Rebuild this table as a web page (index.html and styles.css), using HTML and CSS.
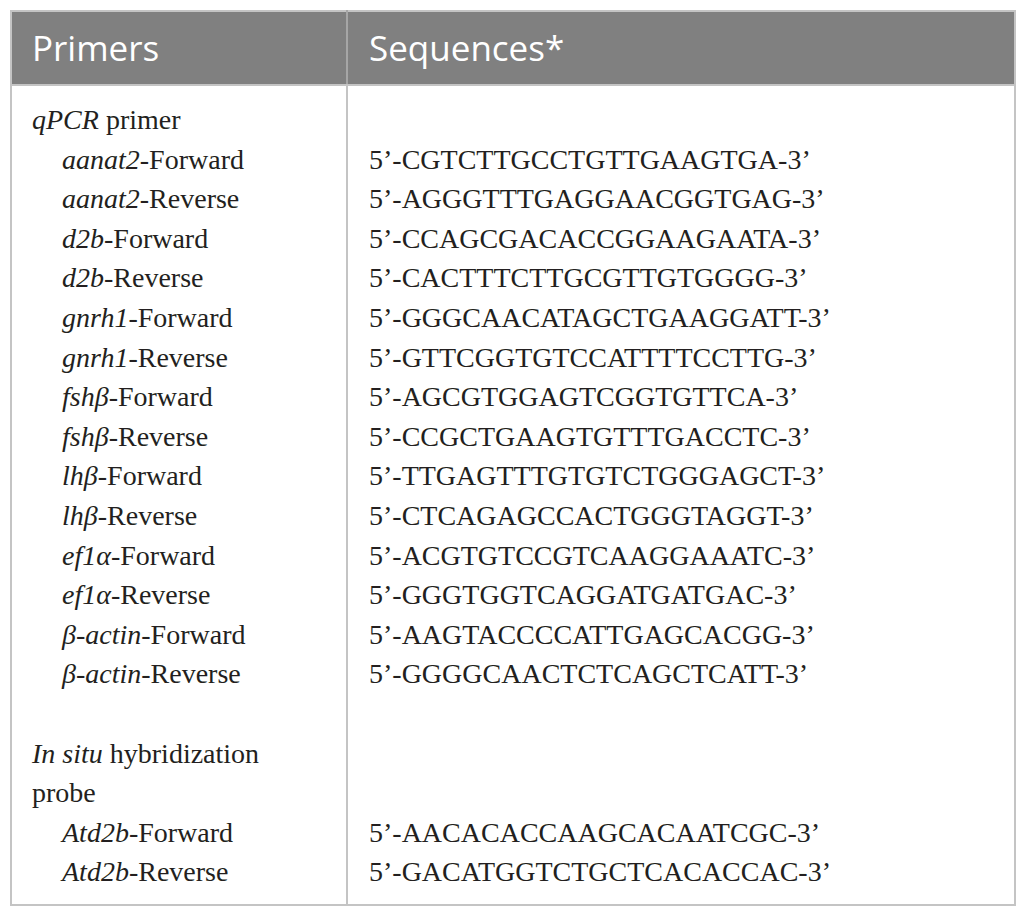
FILE: index.html
```html
<!DOCTYPE html>
<html lang="en">
<head>
<meta charset="utf-8">
<title>Primers</title>
<link rel="stylesheet" href="styles.css">
</head>
<body>
<table class="primers">
  <thead>
    <tr>
      <th class="col-name">Primers</th>
      <th class="col-seq">Sequences*</th>
    </tr>
  </thead>
  <tbody>
    <tr class="first"><td class="name group"><i>qPCR</i> primer</td><td class="seq"></td></tr>
    <tr><td class="name item"><i>aanat2</i>-Forward</td><td class="seq">5’-CGTCTTGCCTGTTGAAGTGA-3’</td></tr>
    <tr><td class="name item"><i>aanat2</i>-Reverse</td><td class="seq">5’-AGGGTTTGAGGAACGGTGAG-3’</td></tr>
    <tr><td class="name item"><i>d2b</i>-Forward</td><td class="seq">5’-CCAGCGACACCGGAAGAATA-3’</td></tr>
    <tr><td class="name item"><i>d2b</i>-Reverse</td><td class="seq">5’-CACTTTCTTGCGTTGTGGGG-3’</td></tr>
    <tr><td class="name item"><i>gnrh1</i>-Forward</td><td class="seq">5’-GGGCAACATAGCTGAAGGATT-3’</td></tr>
    <tr><td class="name item"><i>gnrh1</i>-Reverse</td><td class="seq">5’-GTTCGGTGTCCATTTTCCTTG-3’</td></tr>
    <tr><td class="name item"><i>fshβ</i>-Forward</td><td class="seq">5’-AGCGTGGAGTCGGTGTTCA-3’</td></tr>
    <tr><td class="name item"><i>fshβ</i>-Reverse</td><td class="seq">5’-CCGCTGAAGTGTTTGACCTC-3’</td></tr>
    <tr><td class="name item"><i>lhβ</i>-Forward</td><td class="seq">5’-TTGAGTTTGTGTCTGGGAGCT-3’</td></tr>
    <tr><td class="name item"><i>lhβ</i>-Reverse</td><td class="seq">5’-CTCAGAGCCACTGGGTAGGT-3’</td></tr>
    <tr><td class="name item"><i>ef1α</i>-Forward</td><td class="seq">5’-ACGTGTCCGTCAAGGAAATC-3’</td></tr>
    <tr><td class="name item"><i>ef1α</i>-Reverse</td><td class="seq">5’-GGGTGGTCAGGATGATGAC-3’</td></tr>
    <tr><td class="name item"><i>β-actin</i>-Forward</td><td class="seq">5’-AAGTACCCCATTGAGCACGG-3’</td></tr>
    <tr><td class="name item"><i>β-actin</i>-Reverse</td><td class="seq">5’-GGGGCAACTCTCAGCTCATT-3’</td></tr>
    <tr class="spacer"><td class="name"></td><td class="seq"></td></tr>
    <tr><td class="name group"><i>In situ</i> hybridization<br>probe</td><td class="seq"></td></tr>
    <tr><td class="name item"><i>Atd2b</i>-Forward</td><td class="seq">5’-AACACACCAAGCACAATCGC-3’</td></tr>
    <tr class="last"><td class="name item"><i>Atd2b</i>-Reverse</td><td class="seq">5’-GACATGGTCTGCTCACACCAC-3’</td></tr>
  </tbody>
</table>
</body>
</html>
```

FILE: styles.css
```css
html, body {
  margin: 0;
  padding: 0;
  background: #ffffff;
}

body {
  padding: 10px 10px 0 10px;
}

.primers {
  width: 1006px;
  border-collapse: collapse;
  border: 2px solid #c4c4c4;
  table-layout: fixed;
}

.primers th {
  background: #808080;
  color: #ffffff;
  font-family: "Open Sans", "Noto Sans", sans-serif;
  font-weight: 400;
  font-size: 35px;
  line-height: 48px;
  text-align: left;
  padding: 12px 20px 12px 20px;
  border-bottom: 2px solid #c4c4c4;
}

.primers th.col-name {
  width: 294px;
  padding-left: 20px;
  border-right: 2px solid #a6a6a6;
}

.primers th.col-seq {
  padding-left: 21px;
}

.primers td {
  font-family: "Liberation Serif", "Times New Roman", serif;
  font-size: 28px;
  line-height: 39.6px;
  color: #231f20;
  padding: 0 20px;
  vertical-align: top;
  white-space: nowrap;
}

.primers td.name {
  border-right: 2px solid #c4c4c4;
}

.primers td.seq {
  padding-left: 21px;
}

.primers td.item {
  padding-left: 50px;
}

.primers td i {
  font-style: italic;
}

.primers tr.first td {
  padding-top: 14px;
}

.primers tr.last td {
  padding-bottom: 12px;
}

.primers tr.spacer td {
  height: 39.6px;
}
```
